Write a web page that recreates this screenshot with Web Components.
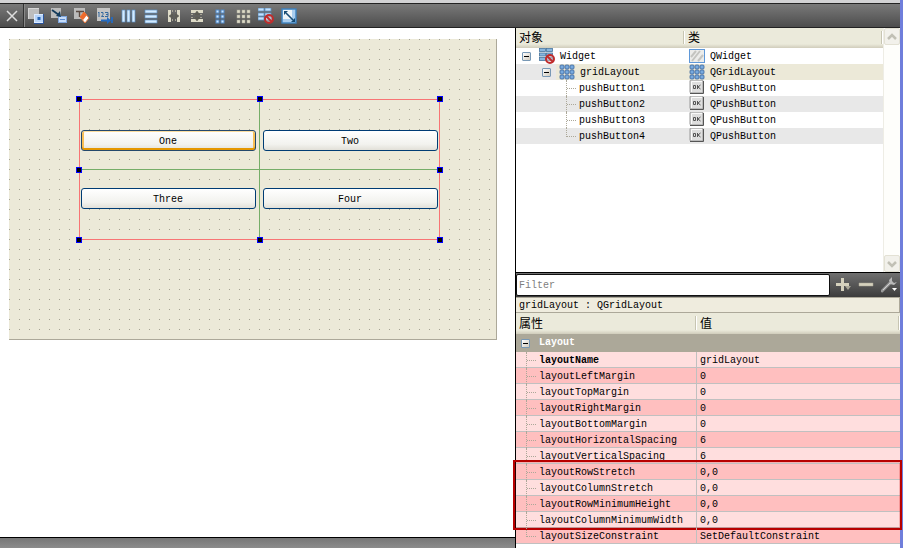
<!DOCTYPE html>
<html lang="zh-CN">
<head>
<meta charset="utf-8">
<title>Qt Designer</title>
<style>
    html, body {
        height: 100%;
        margin: 0;
    }
    body {
        font: 10px/16px "Liberation Mono", "Noto Sans CJK SC", monospace;
        color: #000;
        background: #fff;
        overflow: hidden;
    }
</style>
</head>
<body>
<designer-window>
    <tool-bar slot="toolbar"></tool-bar>
    <form-canvas slot="form">
        <push-button default>One</push-button>
        <push-button>Two</push-button>
        <push-button>Three</push-button>
        <push-button>Four</push-button>
    </form-canvas>
    <object-inspector slot="dock"></object-inspector>
    <property-editor slot="dock"></property-editor>
</designer-window>

<script>
const cells = (xs, ys, w, h, attrs) =>
    ys.map(y => xs.map(x => `<rect x="${x}" y="${y}" width="${w}" height="${h}" ${attrs}/>`).join('')).join('');

const forbidden = `
    <circle cx="11" cy="11" r="4" fill="#e8caca" fill-opacity=".5" stroke="#c02c2c" stroke-width="2"/>
    <path d="M8 8l6 6" stroke="#c02c2c" stroke-width="2"/>`;

const ICONS = {
    close: `<path d="M3 3l10 10M13 3L3 13" stroke="#ddd" stroke-width="1.5" fill="none"/>`,
    widgets: `
        <rect x="0" y="0" width="11" height="11" fill="#bdbdbd"/>
        <path d="M0 0h11v1H1v10H0z" fill="#d6d6d6"/>
        <rect x="6.5" y="6.5" width="9" height="8" fill="#b8d4f8" stroke="#dcebff"/>
        <path d="M6 15.500h9.500V6" stroke="#2b549c" fill="none"/>
        <rect x="9.500" y="9" width="3" height="3" fill="#2765b4"/>`,
    signals: `
        <rect x="0" y="0" width="10" height="10" fill="#bbb"/>
        <rect x="7.500" y="8.500" width="8" height="6" fill="#c5dcfa" stroke="#7fa6df"/>
        <path d="M9 11.500h5" stroke="#5a8ad0"/>
        <path d="M1 2l7 5" stroke="#153c5c" stroke-width="1.800"/>
        <path d="M10 9L5 8l4-5z" fill="#153c5c"/>`,
    buddies: `
        <rect x="0" y="0" width="11" height="11" fill="#bbb"/>
        <path d="M2 3.500h8M5.500 4v5" stroke="#5a4a42" stroke-width="1.400"/>
        <path d="M6 9l4-5 5 6-4 5z" fill="#fff" stroke="#e77538"/>
        <path d="M6 9l4-5 3 3-4 5z" fill="#ee6a2c"/>`,
    taborder: `
        <rect x="0" y="0" width="13" height="13" fill="#c4c4c4"/>
        <path d="M1 5l1-1v5M4 4.500h2v2L4.500 8.500H7M8 4.500h3v4H8M9 6.500h2" stroke="#35699f" fill="none"/>
        <path d="M4 12.500h7M15 9v6" stroke="#246bc1" stroke-width="1.800"/>
        <path d="M10 9l4 3.500-4 3.500z" fill="#246bc1"/>`,
    horizontal: cells([2, 7, 12], [2], 3, 12, 'fill="#d3ebff" stroke="#5c91c7" stroke-width=".7"'),
    vertical: cells([2], [2, 7, 12], 12, 3, 'fill="#d3ebff" stroke="#5c91c7" stroke-width=".7"'),
    hsplitter: `
        <path d="M2 2h3v12H2zM11 2h3v12h-3z" fill="#dedbc8"/>
        <path d="M6.500 2v12M9.500 2v12" stroke="#a9a697" stroke-dasharray="2 1"/>
        <path d="M5 8h6M3 8l4-3v6zM13 8L9 5v6z" fill="#5d5c55" stroke="#5d5c55" stroke-width=".5"/>`,
    vsplitter: `
        <path d="M2 2h12v3H2zM2 11h12v3H2z" fill="#dedbc8"/>
        <path d="M2 6.500h12M2 9.500h12" stroke="#a9a697" stroke-dasharray="2 1"/>
        <path d="M8 5v6M8 3L5 7h6zM8 13L5 9h6z" fill="#5d5c55" stroke="#5d5c55" stroke-width=".5"/>`,
    form: cells([4, 9], [2, 7, 12], 3, 3, 'fill="#cae5ff" stroke="#5189c9"'),
    grid: cells([2, 7, 12], [2, 7, 12], 3, 3, 'fill="#dedbc9" stroke="#a9a697" stroke-width=".5"'),
    broken: cells([0, 7], [0, 5, 9], 6, 3, 'fill="#c4e2ff" stroke="#5d92c3" stroke-width=".8"') + forbidden,
    adjust: `
        <rect x="1" y="1" width="14" height="14" fill="#a9cdee" stroke="#3d82bf" stroke-width="1.400"/>
        <path d="M2 2h9v9H2z" fill="#eef4f8"/>
        <path d="M5 5l7 7" stroke="#154a73" stroke-width="1.600"/>
        <path d="M3 3h4L3 7zM14 14h-4l4-4z" fill="#154a73"/>`,
    gridlayout: cells([1, 6, 11], [1, 6, 11], 4, 4, 'rx="1" fill="#78aade" stroke="#3d659a" stroke-width=".8"'),
    brokenitem: cells([.5, 7.500], [.5, 5, 9.500], 6, 3, 'fill="#88b6df" stroke="#47749d" stroke-width=".8"') + forbidden,
    widget: `
        <rect x=".5" y="1.500" width="15" height="13" fill="#ececea" stroke="#5f98d8"/>
        <path d="M2 9l5-6M3 13l8-10M9 13l5-6" stroke="#c4c4c0" stroke-width="2"/>`,
    ok: `
        <rect x="1" y="0" width="13" height="13" rx="1" fill="#dedede" stroke="#999"/>
        <path d="M2.500 12V1.500H13" stroke="#fafafa" fill="none"/>
        <path d="M1 13.500h13.500V1" stroke="#555" fill="none"/>
        <path d="M4.500 5.500h2v3h-2zM8.500 5v4M11.500 5l-2.500 2 2.500 2" stroke="#555" fill="none"/>`,
    add: `
        <path d="M6 1h3v5h5v3H9v5H6V9H1V6h5z" fill="#d5d1bd"/>
        <path d="M10 9h6l-3 4z" fill="#aaa798"/>`,
    remove: `<path d="M1 6h14v3H1z" fill="#d5d1bd" stroke="#aaa797" stroke-width=".5"/>`,
    configure: `
        <path d="M1 14l8-8" stroke="#999" stroke-width="3" stroke-linecap="round"/>
        <path d="M2 13l8-8" stroke="#d0d0d0"/>
        <path d="M11 0L8 3l1 4 4 1 3-3-3 1-2-2z" fill="#b9b9b9"/>
        <path d="M11 11h5l-2.500 3z" fill="#fff"/>`,
    up: `<path d="M4 10l4-4 4 4" stroke="#c1c0b5" stroke-width="2.500" fill="none"/>`,
    down: `<path d="M4 6l4 4 4-4" stroke="#c1c0b5" stroke-width="2.500" fill="none"/>`
};

class UiIcon extends HTMLElement {
    constructor(){
        super();
        this.shadowDOM = this.attachShadow({mode: 'open'});
    }

    connectedCallback(){
        this.shadowDOM.innerHTML =
        `
        <style>
            :host{
                display:block;
                flex:none;
                width:16px;
                height:16px;
            }
            svg{
                display:block;
            }
        </style>
        <svg width="16" height="16" viewBox="0 0 16 16" fill="none" aria-hidden="true">${ICONS[this.getAttribute('name')]}</svg>
        `
    }
}

class DesignerWindow extends HTMLElement {
    constructor(){
        super();
        this.attachShadow({mode: 'open'}).innerHTML =
        `
        <style>
            *{
                box-sizing:border-box;
            }
            :host{
                display:flex;
                flex-direction:column;
                box-sizing:border-box;
                height:100vh;
                border-right:3px solid #6f7edb;
            }
            .frame{
                height:3px;
                background:#d2d2d4;
            }
            .work{
                flex:1;
                min-height:0;
                display:grid;
                grid-template-columns:minmax(0, 1fr) 385px;
            }
            .left{
                display:flex;
                flex-direction:column;
                min-height:0;
            }
            .area{
                flex:1;
                padding:11px 18px 0 9px;
            }
            .status{
                height:11px;
                border-top:1px solid #000;
                background:linear-gradient(#777, #8c8c8c);
            }
            .dock{
                display:flex;
                flex-direction:column;
                min-height:0;
                border-left:1px solid #000;
            }
        </style>
        <div class="frame"></div>
        <slot name="toolbar"></slot>
        <div class="work">
            <div class="left">
                <div class="area"><slot name="form"></slot></div>
                <div class="status"></div>
            </div>
            <div class="dock"><slot name="dock"></slot></div>
        </div>
        `
    }
}

class ToolBar extends HTMLElement {
    constructor(){
        super();
        const actions = ['widgets', 'signals', 'buddies', 'taborder', 'horizontal', 'vertical',
            'hsplitter', 'vsplitter', 'form', 'grid', 'broken', 'adjust'];
        this.attachShadow({mode: 'open'}).innerHTML =
        `
        <style>
            :host{
                display:flex;
                box-sizing:border-box;
                height:25px;
                border-top:1px solid #222;
                border-bottom:1px solid #222;
                background:linear-gradient(#797979, #4d4d4d);
            }
            button{
                display:flex;
                align-items:center;
                justify-content:center;
                width:23px;
                padding:0;
                border:0;
                background:none;
            }
            .close{
                width:24px;
                border-right:1px solid #333;
                box-shadow:1px 0 #888;
            }
        </style>
        <button class="close" aria-label="close"><ui-icon name="close"></ui-icon></button>
        ${actions.map(name => `<button aria-label="${name}"><ui-icon name="${name}"></ui-icon></button>`).join('')}
        `
    }
}

class FormCanvas extends HTMLElement {
    constructor(){
        super();
        const handles = [[0, 0], [50, 0], [100, 0], [0, 50], [100, 50], [0, 100], [50, 100], [100, 100]];
        this.attachShadow({mode: 'open'}).innerHTML =
        `
        <style>
            :host{
                display:block;
                padding:60px 56px 99px 70px;
                border-right:1px solid #aca899;
                border-bottom:1px solid #aca899;
                background:
                    linear-gradient(90deg, transparent 1px, #ece9d8 1px) 0 0 / 10px 10px,
                    linear-gradient(#a5a293 1px, #ece9d8 1px) 0 0 / 10px 10px;
            }
            .layout{
                position:relative;
                display:grid;
                grid-template-columns:1fr 1fr;
                gap:37px 7px;
                padding:30px 1px;
                border:1px solid #f87474;
            }
            .overlay{
                position:absolute;
                inset:-1px;
                pointer-events:none;
            }
            .line{
                position:absolute;
                background:#76ad68;
            }
            .h{
                top:calc(50% - 1px);
                left:1px;
                right:1px;
                height:1px;
            }
            .v{
                left:calc(50% - 1px);
                top:1px;
                bottom:1px;
                width:1px;
            }
            .handle{
                position:absolute;
                box-sizing:border-box;
                width:6px;
                height:6px;
                margin:-3px;
                border:1px solid #00f;
                background:#000;
            }
        </style>
        <div class="layout">
            <slot></slot>
            <div class="overlay">
                <div class="line h"></div>
                <div class="line v"></div>
                ${handles.map(([x, y]) => `<div class="handle" style="left:${x}%;top:${y}%"></div>`).join('')}
            </div>
        </div>
        `
    }
}

class PushButton extends HTMLElement {
    constructor(){
        super();
        this.attachShadow({mode: 'open'}).innerHTML =
        `
        <style>
            :host{
                display:block;
            }
            button{
                display:block;
                box-sizing:border-box;
                width:100%;
                height:21px;
                padding:2px 1px 0 0;
                border:1px solid #003c74;
                border-radius:3px;
                background:linear-gradient(#fff, #f2f2ee 70%, #e2e0d8);
                font:inherit;
                color:inherit;
            }
            :host([default]) button{
                border-color:#24486c;
                box-shadow:inset 0 1px #fbdda0, inset 0 -2px #e59700, inset 2px 0 #f8bf56, inset -2px 0 #f8bf56;
            }
        </style>
        <button><slot></slot></button>
        `
    }
}

const TABLE_STYLE = `
    *{
        box-sizing:border-box;
    }
    table{
        width:100%;
        table-layout:fixed;
        border-spacing:0;
    }
    th, td{
        padding:0;
        text-align:left;
        white-space:nowrap;
    }
    thead th{
        position:relative;
        padding:2px 3px 0;
        font-size:12px;
        line-height:16px;
        font-weight:normal;
        background:linear-gradient(#ebeadb calc(100% - 4px), #d0ccbb);
    }
    thead th::after{
        content:'';
        position:absolute;
        top:3px;
        bottom:4px;
        right:0;
        width:2px;
        background:linear-gradient(90deg, #c7c5b2 1px, #fff 1px);
    }
    .toggle{
        flex:none;
        position:relative;
        width:9px;
        height:9px;
        padding:0;
        border:1px solid #7898b5;
        border-radius:1px;
        background:linear-gradient(135deg, #fff, #d0cabd);
    }
    .toggle::after{
        content:'';
        position:absolute;
        left:1px;
        right:1px;
        top:3px;
        height:1px;
        background:#000;
    }
`;

class ObjectInspector extends HTMLElement {
    constructor(){
        super();
        this.shadowDOM = this.attachShadow({mode: 'open'});
        this.render();
    }

    render(){
        const buttons = [1, 2, 3, 4].map(n => `
            <tr>
                <td><div class="item leaf">pushButton${n}</div></td>
                <td><div class="item"><ui-icon name="ok"></ui-icon>QPushButton</div></td>
            </tr>`).join('');
        this.shadowDOM.innerHTML =
        `
        <style>
            ${TABLE_STYLE}
            :host{
                flex:1;
                min-height:0;
                display:flex;
            }
            .view{
                flex:1;
            }
            thead th{
                height:20px;
            }
            tbody td{
                height:16px;
            }
            tbody tr:nth-child(even){
                background:#e8e8e8;
            }
            .item{
                position:relative;
                display:flex;
                align-items:flex-start;
                gap:5px;
                height:16px;
                padding-left:4px;
                line-height:18px;
            }
            .item .toggle{
                margin-top:4px;
            }
            .root{
                padding-left:6px;
            }
            .root ui-icon, .child ui-icon{
                margin-left:3px;
            }
            .child{
                padding-left:26px;
            }
            .selected td{
                background:#ece9d8;
            }
            .selected td:first-child{
                background:linear-gradient(90deg, #e8e8e8 40px, #ece9d8 40px);
            }
            .leaf{
                padding-left:63px;
            }
            .leaf::before{
                content:'';
                position:absolute;
                left:50px;
                top:0;
                width:10px;
                height:100%;
                border-left:1px dotted #aca899;
                background:repeating-linear-gradient(90deg, #aca899 0 1px, transparent 1px 2px) 0 8px / 100% 1px no-repeat;
            }
            tr:last-child .leaf::before{
                height:9px;
            }
            .bar{
                display:flex;
                flex-direction:column;
                justify-content:space-between;
                width:17px;
                border-left:1px solid #eeede5;
                background:#fefefb;
            }
            .bar button{
                width:16px;
                height:17px;
                padding:0;
                border:1px solid #e3e1d4;
                border-radius:2px;
                background:#f2f1eb;
            }
            .bar ui-icon{
                margin:-1px;
            }
        </style>
        <div class="view">
            <table>
                <colgroup><col width="169"><col></colgroup>
                <thead><tr><th>对象</th><th>类</th></tr></thead>
                <tbody>
                    <tr>
                        <td><div class="item root"><button class="toggle" aria-label="Widget"></button><ui-icon name="brokenitem"></ui-icon>Widget</div></td>
                        <td><div class="item"><ui-icon name="widget"></ui-icon>QWidget</div></td>
                    </tr>
                    <tr class="selected">
                        <td><div class="item child"><button class="toggle" aria-label="gridLayout"></button><ui-icon name="gridlayout"></ui-icon>gridLayout</div></td>
                        <td><div class="item"><ui-icon name="gridlayout"></ui-icon>QGridLayout</div></td>
                    </tr>
                    ${buttons}
                </tbody>
            </table>
        </div>
        <div class="bar">
            <button aria-label="up"><ui-icon name="up"></ui-icon></button>
            <button aria-label="down"><ui-icon name="down"></ui-icon></button>
        </div>
        `
    }
}

class PropertyEditor extends HTMLElement {
    constructor(){
        super();
        this.shadowDOM = this.attachShadow({mode: 'open'});
        this.sections = [
            {rows: [
                ['layoutName', 'gridLayout'],
                ['layoutLeftMargin', '0'],
                ['layoutTopMargin', '0'],
                ['layoutRightMargin', '0'],
                ['layoutBottomMargin', '0'],
                ['layoutHorizontalSpacing', '6'],
                ['layoutVerticalSpacing', '6']
            ]},
            {marked: true, rows: [
                ['layoutRowStretch', '0,0'],
                ['layoutColumnStretch', '0,0'],
                ['layoutRowMinimumHeight', '0,0'],
                ['layoutColumnMinimumWidth', '0,0']
            ]},
            {rows: [['layoutSizeConstraint', 'SetDefaultConstraint']]}
        ];
        this.render();
    }

    renderSections(){
        let index = 0;
        return this.sections.map(section => `
            <tbody class="${section.marked ? 'marked' : ''}">
                ${section.rows.map(([name, value]) => `
                <tr class="${index++ % 2 ? 'dark' : 'light'}${name === 'layoutName' ? ' changed' : ''}">
                    <th scope="row">${name}</th>
                    <td>${value}</td>
                </tr>`).join('')}
            </tbody>`).join('');
    }

    render(){
        this.shadowDOM.innerHTML =
        `
        <style>
            ${TABLE_STYLE}
            :host{
                display:block;
                box-sizing:border-box;
                height:276px;
                border-top:1px solid #000;
            }
            .filter{
                display:flex;
                align-items:center;
                height:24px;
                background:linear-gradient(#707070, #3c3c3c);
            }
            .filter input{
                flex:1;
                min-width:0;
                height:22px;
                margin-right:1px;
                padding:1px 2px 0;
                border:1px solid #111;
                border-radius:2px;
                background:#fff;
                font:inherit;
            }
            .filter input::placeholder{
                color:#808080;
            }
            .filter button{
                display:flex;
                justify-content:center;
                width:23px;
                padding:0;
                border:0;
                background:none;
            }
            .object{
                height:16px;
                padding-left:3px;
                border:1px solid #aca899;
                border-width:1px 1px 1px 0;
                line-height:16px;
                background:#efecde;
            }
            thead th{
                height:21px;
            }
            .group td{
                height:18px;
                color:#fff;
                font-weight:bold;
                background:#aca899;
            }
            .group div{
                display:flex;
                align-items:center;
                gap:9px;
                padding-left:5px;
            }
            .light, .dark{
                --line:#c0c0c0;
            }
            .light{
                background:#ffdede;
            }
            .dark{
                background:#ffbfbf;
            }
            .light > *, .dark > *{
                height:16px;
                padding:2px 0 0 3px;
                line-height:13px;
                font-weight:normal;
                border-bottom:1px solid var(--line);
            }
            tr > th[scope=row]{
                position:relative;
                padding-left:23px;
                border-right:1px solid var(--line);
            }
            .changed > th[scope=row]{
                font-weight:bold;
            }
            th[scope=row]::before{
                content:'';
                position:absolute;
                left:10px;
                top:0;
                width:10px;
                height:16px;
                border-left:1px dotted #aca899;
                background:repeating-linear-gradient(90deg, #aca899 0 1px, transparent 1px 2px) 0 8px / 100% 1px no-repeat;
            }
            tbody:last-child th[scope=row]::before{
                height:9px;
            }
            .marked{
                position:relative;
            }
            .marked::after{
                content:'';
                position:absolute;
                inset:-4px -2px -2px -3px;
                border:2px solid #b80000;
                box-shadow:inset 0 0 0 1px rgba(200, 0, 0, 0.2);
                pointer-events:none;
            }
        </style>
        <div class="filter">
            <input type="text" placeholder="Filter" aria-label="Filter">
            <button aria-label="add"><ui-icon name="add"></ui-icon></button>
            <button aria-label="remove"><ui-icon name="remove"></ui-icon></button>
            <button aria-label="configure"><ui-icon name="configure"></ui-icon></button>
        </div>
        <div class="object">gridLayout : QGridLayout</div>
        <table>
            <colgroup><col width="181"><col></colgroup>
            <thead><tr><th>属性</th><th>值</th></tr></thead>
            <tbody>
                <tr class="group"><td colspan="2"><div><button class="toggle" aria-label="Layout"></button>Layout</div></td></tr>
            </tbody>
            ${this.renderSections()}
        </table>
        `
    }
}

customElements.define('ui-icon', UiIcon);
customElements.define('designer-window', DesignerWindow);
customElements.define('tool-bar', ToolBar);
customElements.define('form-canvas', FormCanvas);
customElements.define('push-button', PushButton);
customElements.define('object-inspector', ObjectInspector);
customElements.define('property-editor', PropertyEditor);
</script>
</body>
</html>
